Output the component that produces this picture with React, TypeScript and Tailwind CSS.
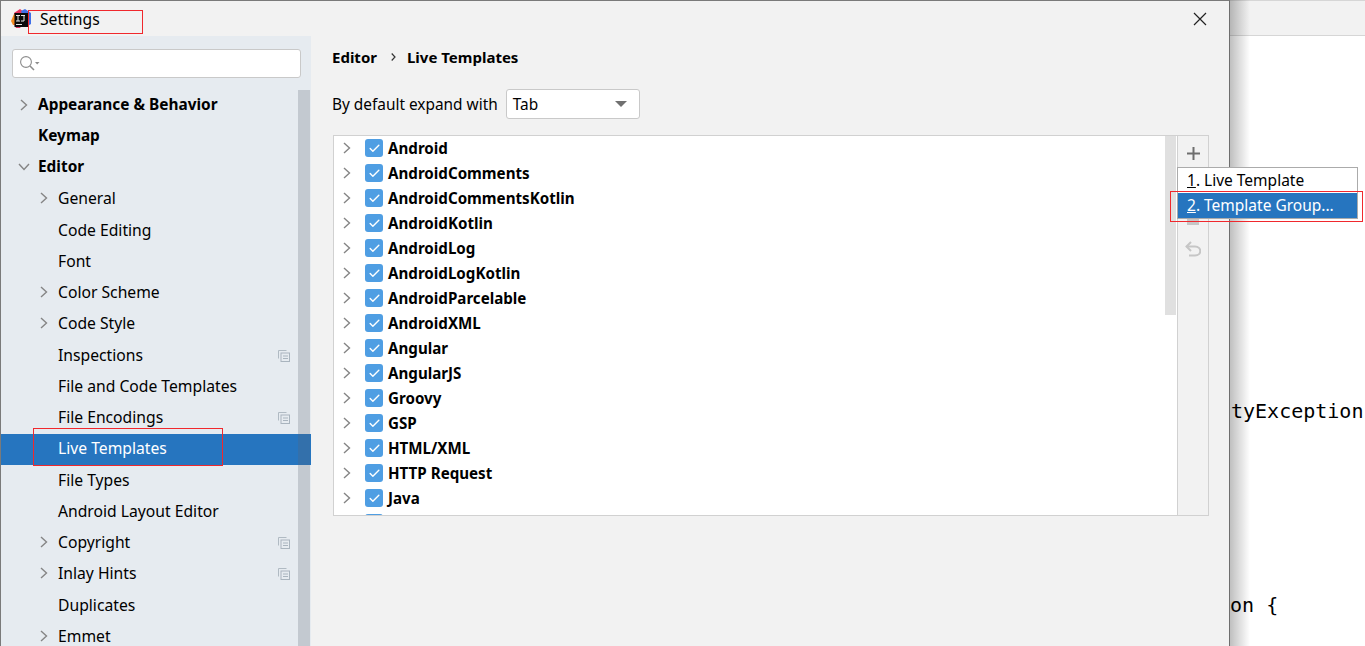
import React from 'react';
import { Check } from 'lucide-react';

interface NavItem {
  label: string;
  level: 0 | 1;
  arrow?: 'right' | 'down';
  copy?: boolean;
  selected?: boolean;
}

const navItems: NavItem[] = [
  { label: 'Appearance & Behavior', level: 0, arrow: 'right' },
  { label: 'Keymap', level: 0 },
  { label: 'Editor', level: 0, arrow: 'down' },
  { label: 'General', level: 1, arrow: 'right' },
  { label: 'Code Editing', level: 1 },
  { label: 'Font', level: 1 },
  { label: 'Color Scheme', level: 1, arrow: 'right' },
  { label: 'Code Style', level: 1, arrow: 'right' },
  { label: 'Inspections', level: 1, copy: true },
  { label: 'File and Code Templates', level: 1 },
  { label: 'File Encodings', level: 1, copy: true },
  { label: 'Live Templates', level: 1, selected: true },
  { label: 'File Types', level: 1 },
  { label: 'Android Layout Editor', level: 1 },
  { label: 'Copyright', level: 1, arrow: 'right', copy: true },
  { label: 'Inlay Hints', level: 1, arrow: 'right', copy: true },
  { label: 'Duplicates', level: 1 },
  { label: 'Emmet', level: 1, arrow: 'right' },
];

const groups = [
  'Android',
  'AndroidComments',
  'AndroidCommentsKotlin',
  'AndroidKotlin',
  'AndroidLog',
  'AndroidLogKotlin',
  'AndroidParcelable',
  'AndroidXML',
  'Angular',
  'AngularJS',
  'Groovy',
  'GSP',
  'HTML/XML',
  'HTTP Request',
  'Java',
];

function AppLogo() {
  return (
    <svg width="20" height="20" viewBox="0 0 20 20" className="shrink-0">
      <path d="M3 4 L9 0 L13 3 L12 10 L3 10 Z" fill="#e8345f" />
      <path d="M0 12 L3 5 L7 9 L6 16 L2 16 Z" fill="#f58a1f" />
      <path d="M10 2 L14 0 L20 4 L20 15 L15 18 Z" fill="#3f6fe8" />
      <path d="M3 15 L12 15 L9 19 L5 19 Z" fill="#d9315f" />
      <rect x="3.5" y="4" width="13.5" height="14" fill="#0a0a0a" />
      <rect x="5" y="15" width="6" height="1" fill="#e8e8e8" />
      <rect x="5" y="6" width="4" height="1" fill="#e8e8e8" />
      <rect x="6.5" y="6" width="1" height="6" fill="#e8e8e8" />
      <rect x="5" y="11.5" width="4" height="1" fill="#e8e8e8" />
      <rect x="10" y="6" width="4" height="1" fill="#e8e8e8" />
      <rect x="12.5" y="6" width="1" height="6" fill="#e8e8e8" />
      <rect x="10" y="11.5" width="3" height="1" fill="#e8e8e8" />
    </svg>
  );
}

function SearchIcon() {
  return (
    <svg width="20" height="16" viewBox="0 0 20 16" fill="none">
      <circle cx="6" cy="6" r="5.4" stroke="#8c8c8c" strokeWidth="1.1" />
      <path d="M10 10 L14 14" stroke="#8c8c8c" strokeWidth="1.6" />
      <path d="M15 6 L19.5 6 L17.2 8.5 Z" fill="#8c8c8c" />
    </svg>
  );
}

function RightArrow() {
  return (
    <svg width="8" height="12" viewBox="0 0 8 12" fill="none" className="shrink-0">
      <path d="M1 1 L6.5 6 L1 11" stroke="#858585" strokeWidth="1.4" />
    </svg>
  );
}

function DownArrow() {
  return (
    <svg width="12" height="8" viewBox="0 0 12 8" fill="none" className="shrink-0">
      <path d="M1 1 L6 6.5 L11 1" stroke="#858585" strokeWidth="1.4" />
    </svg>
  );
}

function CopyIcon() {
  return (
    <svg width="12" height="12" viewBox="0 0 12 12" fill="none" className="shrink-0">
      <path d="M0.5 8.5 V0.5 H8.5" stroke="#b0bac3" />
      <rect x="3" y="3" width="8.5" height="8.5" fill="#e6ebf0" stroke="#a9b4be" />
      <path d="M5 6 H10 M5 8.5 H10" stroke="#a9b4be" />
    </svg>
  );
}

function UndoIcon() {
  return (
    <svg width="16" height="16" viewBox="0 0 16 16" fill="none">
      <path d="M1.5 5.5 H10 C17 5.5 17 14.5 10 14.5 H4" stroke="#c6c6c6" strokeWidth="2" />
      <path d="M6 1 L1.5 5.5 L6 10" stroke="#c6c6c6" strokeWidth="2" />
    </svg>
  );
}

function PlusIcon() {
  return (
    <svg width="13" height="13" viewBox="0 0 13 13">
      <path d="M5.5 0 H7.5 V5.5 H13 V7.5 H7.5 V13 H5.5 V7.5 H0 V5.5 H5.5 Z" fill="#6e6e6e" />
    </svg>
  );
}

function NavRow({ item }: { item: NavItem }) {
  const textColor = item.selected ? 'text-white' : 'text-black';
  return (
    <div className={`flex h-[31.25px] items-center pr-[21px] ${item.selected ? 'bg-[#2675bf]' : ''}`}>
      <div className={`flex items-center justify-center w-[16px] ${item.level === 0 ? 'ml-[15px]' : 'ml-[35px]'} mr-[6px] shrink-0 -translate-y-[1px]`}>
        {item.arrow === 'right' && <RightArrow />}
        {item.arrow === 'down' && <DownArrow />}
      </div>
      <span className={`flex-1 -translate-y-[1px] whitespace-nowrap ${item.level === 0 ? 'font-bold text-[15.4px]' : 'text-[15.7px]'} ${textColor}`}>{item.label}</span>
      {item.copy && <CopyIcon />}
    </div>
  );
}

function TemplateRow({ name }: { name: string }) {
  return (
    <div className="flex h-[25px] shrink-0 items-center">
      <div className="ml-[9px]"><RightArrow /></div>
      <div className="ml-[14px] flex h-[18px] w-[18px] items-center justify-center rounded-[3px] bg-[#4f9ee3]">
        <Check size={13} strokeWidth={2.6} className="text-white" />
      </div>
      <span className="ml-[5px] text-[15.15px] font-bold text-black whitespace-nowrap">{name}</span>
    </div>
  );
}

function RedBox({ className }: { className: string }) {
  return <div className={`absolute border border-[#f0282d] ${className}`} />;
}

export default function App() {
  return (
    <div className="relative flex h-[646px] w-[1365px] overflow-hidden bg-white text-[15px] leading-[20px] font-['Noto_Sans','Open_Sans',sans-serif]">
      {/* Settings dialog */}
      <div className="flex w-[1230px] shrink-0 flex-col border-t border-l border-r border-t-[#7a7a7a] border-l-[#7a7a7a] border-r-[#6e6e6e] bg-[#f2f2f2]">
        <div className="flex h-[35px] shrink-0 items-center pl-[10px] pr-[20px]">
          <AppLogo />
          <span className="ml-[9px] text-[15.7px] text-black">Settings</span>
          <svg width="14" height="14" viewBox="0 0 14 14" className="ml-auto -translate-x-[2px]">
            <path d="M1 1 L13 13 M13 1 L1 13" stroke="#222" strokeWidth="1.2" />
          </svg>
        </div>
        <div className="flex min-h-0 flex-1">
          {/* Sidebar */}
          <div className="relative flex w-[310px] shrink-0 flex-col overflow-hidden bg-[#e6ebf0]">
            <div className="ml-[11px] mr-[10px] mt-[13px] flex h-[29px] items-center rounded-[3px] border border-[#c9c9c9] bg-white pl-[7px]">
              <SearchIcon />
            </div>
            <div className="mt-[12px] flex min-h-0 flex-1">
              <div className="min-w-0 flex-1">
                {navItems.map((item) => (
                  <NavRow key={item.label} item={item} />
                ))}
              </div>
            </div>
            <div className="absolute right-[1px] top-[54px] bottom-0 w-[12px] bg-[#5a6470]/25" />
          </div>
          {/* Main panel */}
          <div className="flex min-w-0 flex-1 flex-col pl-[22px] pr-[20px]">
            <div className="-ml-[1px] mt-[11px] flex h-[20px] items-center font-bold text-black">
              <span>Editor</span>
              <svg width="5" height="8" viewBox="0 0 5 8" fill="none" className="ml-[14px] mr-[11px]">
                <path d="M0.7 0.5 L4 4 L0.7 7.5" stroke="#333" strokeWidth="1.2" />
              </svg>
              <span>Live Templates</span>
            </div>
            <div className="-ml-[1px] mt-[22px] flex h-[30px] items-center">
              <span className="translate-y-[1px] text-[15.4px] text-black">By default expand with</span>
              <div className="ml-[8px] flex h-[30px] w-[134px] items-center justify-between rounded-[3px] border border-[#c9c9c9] bg-white pl-[6px] pr-[12px]">
                <span className="translate-y-[1px] text-[15.4px] text-black">Tab</span>
                <div className="h-0 w-0 border-x-[6px] border-t-[6px] border-x-transparent border-t-[#707070]" />
              </div>
            </div>
            <div className="mt-[16px] flex h-[381px] border border-[#d1d1d1]">
              <div className="relative flex min-w-0 flex-1 flex-col overflow-hidden bg-white">
                <div className="-mt-[0.5px] flex flex-col">
                  {groups.map((name) => (
                    <TemplateRow key={name} name={name} />
                  ))}
                  <div className="ml-[31px] mt-[3px] h-[18px] w-[18px] shrink-0 rounded-[3px] bg-[#4f9ee3]" />
                </div>
                <div className="absolute right-[1px] top-0 h-[179px] w-[11px] bg-[#e0e0e0]" />
              </div>
              <div className="flex w-[31px] shrink-0 flex-col items-center border-l border-[#d1d1d1] pt-[11px]">
                <PlusIcon />
                <div className="mt-[53px] h-[12px] w-[12px] bg-[#c6c6c6]" />
                <div className="mt-[16px]"><UndoIcon /></div>
              </div>
            </div>
          </div>
        </div>
      </div>

      {/* Editor behind the dialog */}
      <div className="relative min-w-0 flex-1 overflow-hidden bg-white">
        <div className="h-[36px] border-y border-[#d6d6d6] bg-[#f2f2f2]" />
        <div className="pt-[365px] pl-[1px] font-['DejaVu_Sans_Mono',monospace] text-[20px] leading-[20px] text-black whitespace-nowrap">tyException</div>
        <div className="pt-[174px] font-['DejaVu_Sans_Mono',monospace] text-[20px] leading-[20px] text-black whitespace-nowrap">on {'{'}</div>
        <div className="absolute inset-y-0 left-0 w-[20px] bg-gradient-to-r from-black/25 to-transparent" />
      </div>

      {/* Add popup */}
      <div className="absolute left-[1177px] top-[167px] w-[181px] border border-[#ababab] bg-white">
        <div className="flex h-[25px] items-center pl-[9px] text-[15.5px] text-black">
          <span className="-translate-y-[1px]"><span className="underline">1</span>. Live Template</span>
        </div>
        <div className="flex h-[25px] items-center bg-[#2675bf] pl-[9px] text-[15.5px] text-white">
          <span className="-translate-y-[1px]"><span className="underline">2</span>. Template Group...</span>
        </div>
      </div>

      {/* Red annotation boxes */}
      <RedBox className="left-[28px] top-[10px] h-[24px] w-[115px]" />
      <RedBox className="left-[33px] top-[428px] h-[38px] w-[190px]" />
      <RedBox className="left-[1170px] top-[191px] h-[31px] w-[193px]" />
    </div>
  );
}
